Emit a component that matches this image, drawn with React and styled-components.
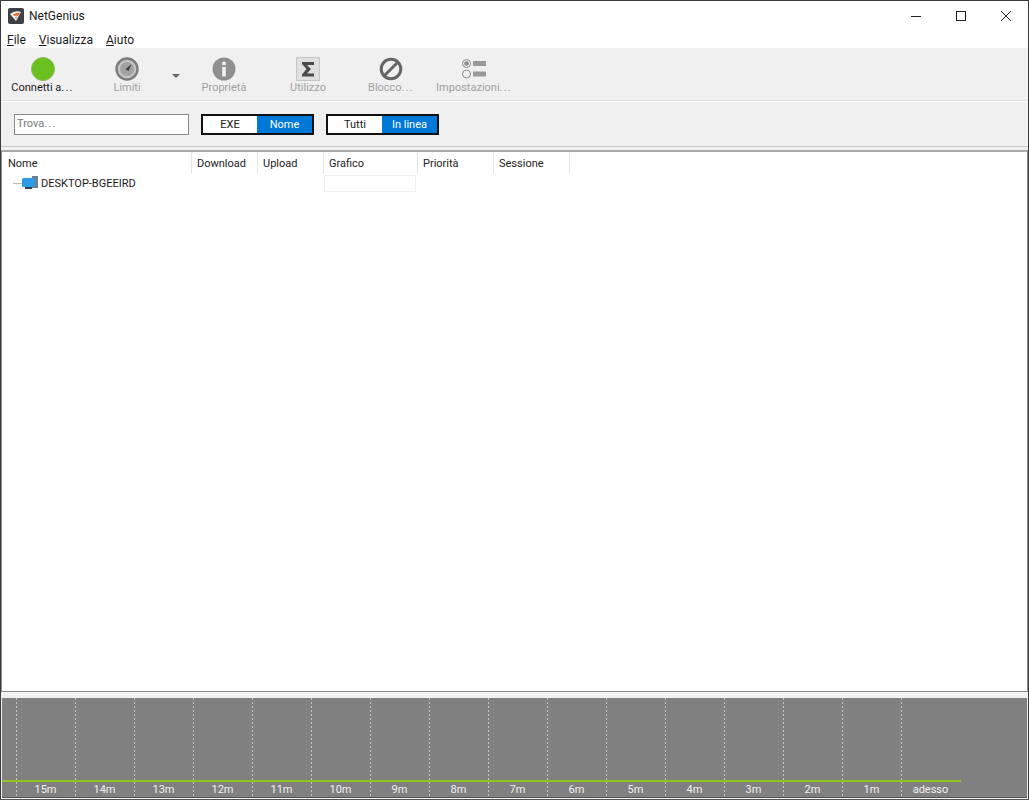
import React from "react";
import styled, {createGlobalStyle} from "styled-components";

const Global = createGlobalStyle`
  html, body {
    margin: 0;
    padding: 0;
    background: #fff;
  }
`;

const Window = styled.div`
  width: 1029px;
  height: 800px;
  box-sizing: border-box;
  border: 1px solid #3a3a3a;
  border-bottom-color: #555;
  display: flex;
  flex-direction: column;
  overflow: hidden;
  font-family: Roboto, "Liberation Sans", sans-serif;
  font-size: 11px;
  color: #1a1a1a;
  background: #f0f0f0;
`;

// barra del titolo
const TitleBar = styled.div`
  height: 29px;
  display: flex;
  align-items: center;
  padding-left: 7px;
  flex: none;
  background: #fff;
`;

const AppName = styled.div`
  margin-left: 5px;
  font-size: 12px;
`;

const WindowButtons = styled.div`
  margin-left: auto;
  display: flex;
  height: 100%;
`;

const WindowButton = styled.div`
  width: 45px;
  display: flex;
  align-items: center;
  justify-content: center;
`;

const MenuBar = styled.div`
  height: 18px;
  display: flex;
  align-items: center;
  gap: 13px;
  padding-left: 6px;
  padding-top: 2px;
  box-sizing: border-box;
  font-size: 12px;
  flex: none;
  background: #fff;
`;

const MenuItem = styled.span`
  &::first-letter {
    text-decoration: underline;
  }
`;

const Toolbar = styled.div`
  height: 53px;
  flex: none;
  display: flex;
  background: #f0f0f0;
  border-bottom: 1px solid #dcdcdc;
  box-sizing: border-box;
`;

const ToolButton = styled.div`
  width: ${(p) => p.$width}px;
  display: flex;
  flex-direction: column;
  align-items: center;
  padding-top: 9px;
  box-sizing: border-box;
  color: ${(p) => (p.$active ? "#1a1a1a" : "#a0a0a0")};
`;

const ToolIcon = styled.div`
  height: 24px;
  display: flex;
  align-items: center;
  justify-content: center;
`;

const Dots = styled.span`
  letter-spacing: 1.2px;
`;

const DropArrow = styled.div`
  width: 11px;
  padding-top: 26px;
  box-sizing: border-box;
  display: flex;
  justify-content: center;
  &::after {
    content: "";
    border-left: 4px solid transparent;
    border-right: 4px solid transparent;
    border-top: 4px solid #666;
    height: 0;
  }
`;

const FilterBar = styled.div`
  height: 46px;
  flex: none;
  display: flex;
  align-items: center;
  padding-left: 13px;
  box-sizing: border-box;
  background: #f0f0f0;
  border-top: 1px solid #fff;
  border-bottom: 1px solid #c8c8c8;
`;

const SearchBox = styled.div`
  width: 175px;
  height: 21px;
  box-sizing: border-box;
  border: 1px solid #8a8a8a;
  background: #fff;
  color: #777;
  padding-left: 2px;
  line-height: 18px;
  margin-right: 12px;
`;

const Toggle = styled.div`
  display: flex;
  height: 21px;
  box-sizing: border-box;
  border: 2px solid #111;
  margin-right: 12px;
`;

const ToggleOption = styled.div`
  width: ${(p) => p.$width}px;
  display: flex;
  align-items: center;
  justify-content: center;
  background: ${(p) => (p.$on ? "#0078d7" : "#fff")};
  color: ${(p) => (p.$on ? "#fff" : "#1a1a1a")};
`;

const Table = styled.div`
  flex: 1;
  min-height: 0;
  border-top: 2px solid #a9a9a9;
  border-bottom: 1px solid #8c8c8c;
  border-left: 1px solid #8c8c8c;
  border-right: 1px solid #8c8c8c;
  margin-top: 3px;
  background: #fff;
`;

const HeaderRow = styled.div`
  display: flex;
  height: 22px;
`;

const HeaderCell = styled.div`
  width: ${(p) => p.$width}px;
  box-sizing: border-box;
  padding-left: ${(p) => p.$pad || 5}px;
  display: flex;
  align-items: center;
  border-right: 1px solid #e5e5e5;
  color: #222;
`;

const Row = styled.div`
  display: flex;
  height: 18px;
  align-items: center;
`;

const NameCell = styled.div`
  width: 322px;
  display: flex;
  align-items: center;
  padding-left: 11px;
  box-sizing: border-box;
`;

const TreeLine = styled.div`
  width: 9px;
  height: 1px;
  background: #bbb;
`;

const HostName = styled.span`
  margin-left: 3px;
`;

const GraphCell = styled.div`
  width: 92px;
  height: 17px;
  box-sizing: border-box;
  border: 1px solid #f0f0f0;
`;

const Gap = styled.div`
  height: 6px;
  flex: none;
  background: #f2f2f2;
`;

const Chart = styled.div`
  position: relative;
  height: 100px;
  flex: none;
  margin: 0 1px 1px;
  padding-left: 14px;
  display: flex;
  background: #808080;
  color: #f0f0f0;
  border-bottom: 1px solid #555;
  box-sizing: border-box;
`;

const ChartColumn = styled.div`
  width: 59px;
  flex: none;
  box-sizing: border-box;
  background-image: repeating-linear-gradient(to bottom, #c4c4c4 0 2px, transparent 2px 4px);
  background-size: 1px 100%;
  background-repeat: no-repeat;
  display: flex;
  align-items: flex-end;
  justify-content: center;
  padding-bottom: 1px;
`;

const UsageLine = styled.div`
  position: absolute;
  left: 0;
  bottom: 15px;
  width: 959px;
  height: 2px;
  background: #8fc31f;
`;

function AppIcon() {
  return (
    <svg width="16" height="16" viewBox="0 0 16 16">
      <rect width="16" height="16" rx="2" fill="#3f3f46" />
      <path d="M2 6 Q7 2 13 4 L8 13 Z" fill="#f3f3f3" />
      <path d="M5 6.5 Q8 4.5 12 4.8 L10 8 Q8 6.8 6 8 Z" fill="#e8622c" />
      <path d="M7 9 L9 8.4 L8.2 11 Z" fill="#e8622c" />
    </svg>
  );
}

function GreenDot() {
  return (
    <svg width="24" height="24" viewBox="0 0 24 24">
      <circle cx="12" cy="12" r="11.5" fill="#69c01e" stroke="#8fb85e" />
    </svg>
  );
}

function GaugeIcon() {
  return (
    <svg width="24" height="24" viewBox="0 0 24 24">
      <circle cx="12" cy="12" r="10.5" fill="#c4c4c4" stroke="#7c7c7c" strokeWidth="2.4" />
      <circle cx="12" cy="12" r="7" fill="#a2a2a2" />
      <path d="M16.5 7 L13.6 14 L10.4 12.2 Z" fill="#444" />
    </svg>
  );
}

function InfoIcon() {
  return (
    <svg width="24" height="24" viewBox="0 0 24 24">
      <circle cx="12" cy="12" r="11.5" fill="#8f8f8f" />
      <circle cx="12" cy="6.5" r="2" fill="#f2f2f2" />
      <rect x="10.2" y="10" width="3.6" height="9.5" fill="#f2f2f2" />
    </svg>
  );
}

function SigmaIcon() {
  return (
    <svg width="24" height="24" viewBox="0 0 24 24">
      <rect x="0.5" y="0.5" width="23" height="23" fill="#e0e0e0" stroke="#c6c6c6" />
      <path d="M6 5 H18 V8 H11 L15 12 L11 16.5 H18 V19.5 H6 V17.5 L10.5 12 L6 7 Z" fill="#4a4a4a" />
    </svg>
  );
}

function BlockIcon() {
  return (
    <svg width="24" height="24" viewBox="0 0 24 24">
      <circle cx="12" cy="12" r="9.8" fill="none" stroke="#666" strokeWidth="3" />
      <path d="M5.5 18.5 L18.5 5.5" stroke="#666" strokeWidth="3" />
    </svg>
  );
}

function SettingsIcon() {
  return (
    <svg width="26" height="24" viewBox="0 0 26 24">
      <circle cx="5.5" cy="6.5" r="4" fill="none" stroke="#8a8a8a" />
      <circle cx="5.5" cy="6.5" r="2.3" fill="#8a8a8a" />
      <circle cx="5.5" cy="17" r="4" fill="none" stroke="#8a8a8a" />
      <rect x="12" y="4" width="13" height="5" fill="#999" />
      <rect x="12" y="14.5" width="13" height="5" fill="#999" />
    </svg>
  );
}

function MonitorIcon() {
  return (
    <svg width="16" height="14" viewBox="0 0 16 14">
      <rect x="10" y="0" width="6" height="12" fill="#6f7f8f" />
      <rect x="0" y="2" width="13" height="9" rx="1.5" fill="#2c9be8" />
      <rect x="3" y="11" width="7" height="2" fill="#33424f" />
    </svg>
  );
}

const tools = [
  {label: "Connetti a", dots: true, icon: <GreenDot />, width: 83, active: true},
  {label: "Limiti", icon: <GaugeIcon />, width: 86, arrow: true},
  {label: "Proprietà", icon: <InfoIcon />, width: 86},
  {label: "Utilizzo", icon: <SigmaIcon />, width: 82},
  {label: "Blocco", dots: true, icon: <BlockIcon />, width: 84},
  {label: "Impostazioni", dots: true, icon: <SettingsIcon />, width: 82},
];

const columns = [
  {label: "Nome", width: 190, pad: 6},
  {label: "Download", width: 66},
  {label: "Upload", width: 66},
  {label: "Grafico", width: 94},
  {label: "Priorità", width: 76},
  {label: "Sessione", width: 76},
];

const times = ["15m", "14m", "13m", "12m", "11m", "10m", "9m", "8m", "7m", "6m", "5m", "4m", "3m", "2m", "1m", "adesso"];

export default function App() {
  return (
    <>
      <Global />
      <Window>
        <TitleBar>
          <AppIcon />
          <AppName>NetGenius</AppName>
          <WindowButtons>
            <WindowButton>
              <svg width="10" height="10" viewBox="0 0 10 10"><path d="M0 5.5 H10" stroke="#222" /></svg>
            </WindowButton>
            <WindowButton>
              <svg width="10" height="10" viewBox="0 0 10 10"><rect x="0.5" y="0.5" width="9" height="9" fill="none" stroke="#222" /></svg>
            </WindowButton>
            <WindowButton>
              <svg width="10" height="10" viewBox="0 0 10 10"><path d="M0 0 L10 10 M10 0 L0 10" stroke="#222" /></svg>
            </WindowButton>
          </WindowButtons>
        </TitleBar>
        <MenuBar>
          <MenuItem>File</MenuItem>
          <MenuItem>Visualizza</MenuItem>
          <MenuItem>Aiuto</MenuItem>
        </MenuBar>
        <Toolbar>
          {tools.map((t) => (
            <React.Fragment key={t.label}>
              <ToolButton $width={t.width} $active={t.active}>
                <ToolIcon>{t.icon}</ToolIcon>
                <span>{t.label}{t.dots && <Dots>...</Dots>}</span>
              </ToolButton>
              {t.arrow && <DropArrow />}
            </React.Fragment>
          ))}
        </Toolbar>
        <FilterBar>
          <SearchBox>Trova<Dots>...</Dots></SearchBox>
          <Toggle>
            <ToggleOption $width={54}>EXE</ToggleOption>
            <ToggleOption $width={55} $on>Nome</ToggleOption>
          </Toggle>
          <Toggle>
            <ToggleOption $width={54}>Tutti</ToggleOption>
            <ToggleOption $width={55} $on>In linea</ToggleOption>
          </Toggle>
        </FilterBar>
        <Table>
          <HeaderRow>
            {columns.map((c) => (
              <HeaderCell key={c.label} $width={c.width} $pad={c.pad}>{c.label}</HeaderCell>
            ))}
          </HeaderRow>
          <Row>
            <NameCell>
              <TreeLine />
              <MonitorIcon />
              <HostName>DESKTOP-BGEEIRD</HostName>
            </NameCell>
            <GraphCell />
          </Row>
        </Table>
        <Gap />
        <Chart>
          {times.map((t) => (
            <ChartColumn key={t}>{t}</ChartColumn>
          ))}
          <UsageLine />
        </Chart>
      </Window>
    </>
  );
}
